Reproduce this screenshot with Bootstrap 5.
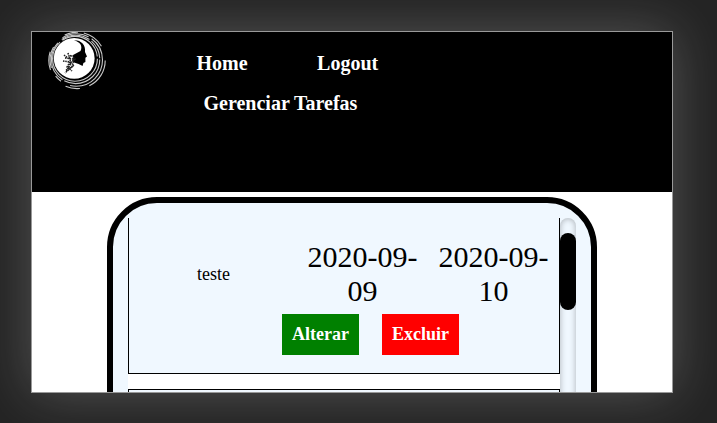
<!DOCTYPE html>
<html lang="pt-BR">
<head>
<meta charset="utf-8">
<meta name="viewport" content="width=device-width, initial-scale=1">
<title>Gerenciar Tarefas</title>
<link rel="stylesheet" href="https://cdn.jsdelivr.net/npm/bootstrap@5.3.0/dist/css/bootstrap.min.css">
<style>
body { background: #242424; font-family: "Liberation Serif", "Times New Roman", serif; color: #000; height: 423px; padding: 31px; }
.viewport-frame { width: 642px; height: 362px; border: 1px solid #999; box-shadow: 0 0 50px rgba(255,255,255,.22); }
.site-header { height: 160px; background: #000; padding-left: 16px; }
.site-logo { width: 58px; height: 58px; margin-right: 90.5px; }
.site-menu { padding-top: 11px; }
.site-menu a { color: #fff; font-weight: 700; font-size: 20px; line-height: 40px; }
.site-menu-row { gap: 69.5px; }
.site-menu .menu-wide { padding-left: 7px; }
.panel { width: 490px; height: 400px; margin: 5px 0 0 75px; border: 6px solid #000; border-radius: 50px; background: #f0f8ff; padding: 15px; }
.task-list { width: 432px; background: #fff; }
.task { border: 1px solid #000; background: #f0f8ff; margin-bottom: 15px; }
.task:first-child { height: 156px; border-top: 0; padding-top: 22px; }
.task-name { width: 168px; font-size: 18px; padding: 1px 0 0 1px; }
.task-date { width: 131px; font-size: 30px; line-height: 34px; padding: 0 8px; }
.task-actions { gap: 23px; padding: 6px 0 0 153px; }
.task-actions .btn { --bs-btn-padding-x: 10px; --bs-btn-padding-y: 10px; --bs-btn-font-size: 18px; --bs-btn-line-height: 21px; --bs-btn-border-radius: 0; --bs-btn-color: #fff; border: 0; font-weight: 700; }
.btn-edit { background: #008000; }
.btn-remove { background: #f00; }
.track { width: 16px; border-radius: 10px; padding-top: 15px; box-shadow: inset 0 0 6px rgba(0,0,0,.3); }
.thumb { height: 77px; border-radius: 10px; background: #000; }
</style>
</head>
<body>
<main class="viewport-frame bg-white overflow-hidden">
  <header class="site-header d-flex align-items-start">
    <svg class="site-logo flex-shrink-0" viewBox="0 0 58 58" aria-label="Logo">
      <g fill="none" stroke="#c8c8c8" stroke-width="1.1" pathLength="360">
        <circle cx="27" cy="26.8" r="22.4" pathLength="360" stroke-dasharray="228 8 118 6"/>
        <circle cx="27.6" cy="27.4" r="24.2" pathLength="360" stroke-dasharray="118 5 100 12 70 6 46 3"/>
        <circle cx="28.3" cy="28" r="26.2" pathLength="360" stroke-dasharray="104 22 16 20 48 28 60 8 54 0"/>
        <circle cx="29" cy="28.4" r="28.2" pathLength="360" stroke-dasharray="64 20 30 46 38 26 0 20 28 12 46 30"/>
      </g>
      <circle cx="26.2" cy="26.4" r="20.4" fill="#fff"/>
      <path d="M26 8.3C33 8 38 13 37 20l2 4.5-1.6 1.2 0 4.4-2 .8-.8 3.1-4-2-6-2 .5-7 7.4-4C35 14 32 10 26 8.3z"/>
      <g fill="none" stroke="#222" stroke-width="1.6" stroke-dasharray="1.5 .8"><path d="M16 23l5 4 2-4 4 4-5 4 4 2-9 8M15 29l7 1-3 5 5 4M20 21l3 10-5 9M26 27l-2 8-6 3M17 26l8 1"/></g>
    </svg>
    <nav class="site-menu d-grid">
      <div class="d-flex site-menu-row">
        <a class="text-decoration-none" href="#">Home</a>
        <a class="text-decoration-none" href="#">Logout</a>
      </div>
      <a class="text-decoration-none menu-wide" href="#">Gerenciar Tarefas</a>
    </nav>
  </header>
  <section class="panel d-flex">
    <div class="task-list">
      <article class="task">
        <div class="d-flex align-items-center text-center">
          <div class="task-name">teste</div>
          <div class="task-date">2020-09-09</div>
          <div class="task-date">2020-09-10</div>
        </div>
        <div class="task-actions d-flex">
          <button class="btn btn-edit" type="button">Alterar</button>
          <button class="btn btn-remove" type="button">Excluir</button>
        </div>
      </article>
      <article class="task py-5"></article>
    </div>
    <div class="track"><div class="thumb"></div></div>
  </section>
</main>
<script src="https://cdn.jsdelivr.net/npm/bootstrap@5.3.0/dist/js/bootstrap.bundle.min.js"></script>
</body>
</html>
